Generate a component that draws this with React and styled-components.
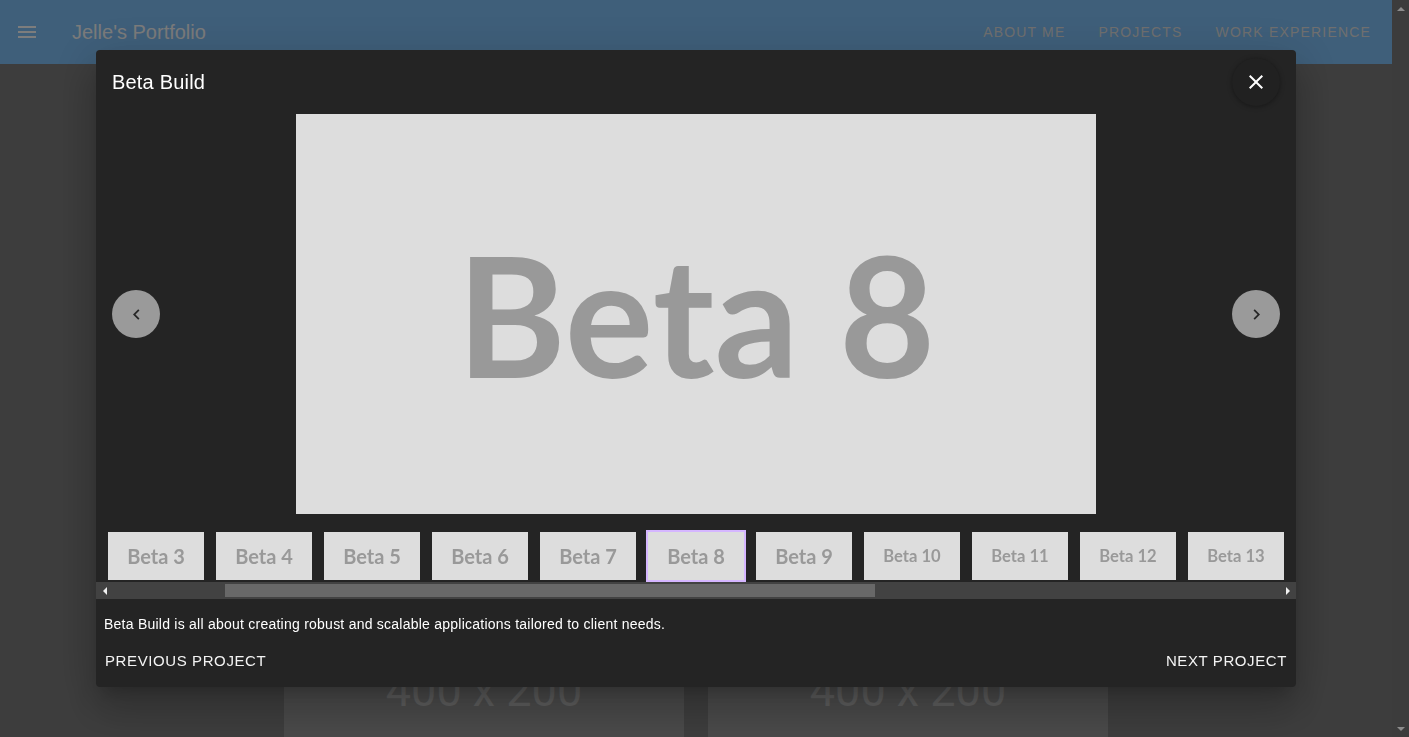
import React, { useLayoutEffect, useRef, useState } from "react";
import styled, { createGlobalStyle, css } from "styled-components";

const GlobalStyle = createGlobalStyle`
  html, body { margin: 0; height: 100%; overflow: hidden; }
  body {
    font-family: "Liberation Sans", Arial, sans-serif;
    background: #7b7b7b;
  }
`;

const Root = styled.div`
  display: flex;
  height: 100vh;
  overflow: hidden;
`;

const Page = styled.div`
  flex: 1;
  min-width: 0;
  overflow: hidden;
  background: #7b7b7b;
`;

/* ---------- fake scrollbars (the browser hides native ones) ---------- */

const arrowShape = {
  up: css`
    border-left: 4px solid transparent;
    border-right: 4px solid transparent;
    border-bottom: 4px solid currentColor;
  `,
  down: css`
    border-left: 4px solid transparent;
    border-right: 4px solid transparent;
    border-top: 4px solid currentColor;
  `,
  left: css`
    border-top: 4px solid transparent;
    border-bottom: 4px solid transparent;
    border-right: 4px solid currentColor;
  `,
  right: css`
    border-top: 4px solid transparent;
    border-bottom: 4px solid transparent;
    border-left: 4px solid currentColor;
  `,
};

const ScrollArrow = styled.span`
  flex: none;
  width: 17px;
  height: 17px;
  display: flex;
  align-items: center;
  justify-content: center;
  color: ${(p) => p.$color};

  &::before {
    content: "";
    width: 0;
    height: 0;
    ${(p) => arrowShape[p.$dir]}
  }
`;

const PageScrollbar = styled.aside`
  flex: none;
  width: 17px;
  display: flex;
  flex-direction: column;
  justify-content: space-between;
  background: #3c3c3c;
`;

const HScrollbar = styled.div`
  height: 17px;
  display: flex;
  align-items: center;
  background: #424242;
`;

const HTrack = styled.div`
  flex: 1;
  height: 13px;
  display: flex;
`;

const HThumb = styled.div`
  height: 13px;
  background: #686868;
`;

/* ---------- page ---------- */

const NavBar = styled.header`
  height: 64px;
  display: flex;
  align-items: center;
  padding: 0 21px 0 15px;
  background: #7ebef4;
`;

const MenuButton = styled.span`
  display: flex;
  width: 24px;
  height: 24px;
  color: #fafafa;
`;

const Brand = styled.div`
  margin-left: 33px;
  font-size: 20px;
  color: #f6f6f6;
  flex: 1;
`;

const NavLinks = styled.nav`
  display: flex;
  gap: 33px;
`;

const NavLink = styled.span`
  font-size: 14px;
  letter-spacing: 1.18px;
  text-transform: uppercase;
  color: #dedede;
`;

const Content = styled.main`
  padding-top: 526px;
  display: flex;
  justify-content: center;
`;

const CardGrid = styled.div`
  display: flex;
  gap: 24px;
`;

const PlaceholderCard = styled.div`
  width: 400px;
  height: 200px;
  background: #949494;
  display: flex;
  align-items: center;
  justify-content: center;
  font-family: Roboto, "Liberation Sans", sans-serif;
  font-size: 45px;
  color: #b9b9b9;
`;

/* ---------- dialog ---------- */

const Backdrop = styled.div`
  position: fixed;
  top: 0;
  left: 0;
  bottom: 0;
  right: 17px;
  background: rgba(0, 0, 0, 0.5);
  display: flex;
  align-items: center;
  justify-content: center;
`;

const Dialog = styled.div`
  width: 1200px;
  background: #242424;
  border-radius: 4px;
  box-shadow: 0 11px 15px -7px rgba(0,0,0,.2), 0 24px 38px 3px rgba(0,0,0,.14), 0 9px 46px 8px rgba(0,0,0,.12);
  display: flex;
  flex-direction: column;
  color: #fff;
`;

const DialogHeader = styled.div`
  display: flex;
  align-items: center;
  justify-content: space-between;
  padding: 8px 16px 0;
`;

const DialogTitle = styled.h2`
  margin: 0;
  font-size: 20px;
  font-weight: 400;
  letter-spacing: 0.2px;
  color: #fff;
`;

const RoundButton = styled.button`
  width: 48px;
  height: 48px;
  border-radius: 50%;
  border: none;
  padding: 0;
  display: flex;
  align-items: center;
  justify-content: center;
  cursor: pointer;
  background: ${(p) => (p.$variant === "close" ? "#212121" : "#9a9a9a")};
  color: ${(p) => (p.$variant === "close" ? "#ffffff" : "#262626")};
  box-shadow: ${(p) =>
    p.$variant === "close" ? "0 1px 5px rgba(0,0,0,.35)" : "none"};
`;

const Viewer = styled.div`
  display: flex;
  align-items: center;
  justify-content: space-between;
  padding: 0 16px;
  margin-top: 8px;
`;

const MainImage = styled.div`
  width: 800px;
  height: 400px;
  background: #dddddd;
  display: flex;
  align-items: center;
  justify-content: center;
  font-family: Lato, "Liberation Sans", sans-serif;
  font-weight: 700;
  font-size: 166px;
  line-height: 1;
  color: #999999;
`;

const ThumbSection = styled.div`
  margin-top: 16px;
  display: flex;
  flex-direction: column;
`;

const ThumbStrip = styled.div`
  position: relative;
  display: flex;
  gap: 12px;
  padding: 2px;
  overflow-x: auto;
  overflow-y: hidden;
  scrollbar-width: none;
`;

const Thumb = styled.div`
  flex: none;
  width: 96px;
  height: 48px;
  background: #dddddd;
  display: flex;
  align-items: center;
  justify-content: center;
  font-family: Lato, "Liberation Sans", sans-serif;
  font-weight: 700;
  font-size: ${(p) => p.$size}px;
  color: #999999;
  cursor: pointer;
  outline: ${(p) => (p.$active ? "2px solid #d5b6ff" : "none")};
`;

const Description = styled.p`
  margin: 0;
  padding: 15px 8px 0;
  font-size: 14px;
  line-height: 20px;
  letter-spacing: 0.24px;
  color: #ffffff;
`;

const Actions = styled.div`
  display: flex;
  justify-content: space-between;
  padding: 9px 8px 8px;
`;

const TextButton = styled.button`
  background: none;
  border: none;
  padding: 8px 1px;
  font-family: "Liberation Sans", Arial, sans-serif;
  font-size: 15px;
  line-height: 20px;
  letter-spacing: 0.6px;
  text-transform: uppercase;
  color: #f4f4f4;
  cursor: pointer;
`;

const MenuIcon = () => (
  <svg width="24" height="24" viewBox="0 0 24 24" fill="currentColor">
    <path d="M3 18h18v-2H3zm0-5h18v-2H3zm0-7v2h18V6z" />
  </svg>
);

const CloseIcon = () => (
  <svg width="24" height="24" viewBox="0 0 24 24" fill="currentColor">
    <path d="M19 6.41 17.59 5 12 10.59 6.41 5 5 6.41 10.59 12 5 17.59 6.41 19 12 13.41 17.59 19 19 17.59 13.41 12z" />
  </svg>
);

const ChevronLeft = () => (
  <svg width="21" height="21" viewBox="0 0 24 24" fill="currentColor">
    <path d="M15.41 7.41 14 6l-6 6 6 6 1.41-1.41L10.83 12z" />
  </svg>
);

const ChevronRight = () => (
  <svg width="21" height="21" viewBox="0 0 24 24" fill="currentColor">
    <path d="M10 6 8.59 7.41 13.17 12l-4.58 4.59L10 18l6-6z" />
  </svg>
);

const links = ["About me", "Projects", "Work experience"];
const thumbs = Array.from({ length: 20 }, (_, i) => i + 1);
const ACTIVE = 8;

export default function App() {
  const stripRef = useRef(null);
  const activeRef = useRef(null);
  const trackRef = useRef(null);
  const [thumb, setThumb] = useState({ left: 0, width: 0 });

  useLayoutEffect(() => {
    const strip = stripRef.current;
    const active = activeRef.current;
    const track = trackRef.current;
    if (!strip || !active || !track) return;
    strip.scrollLeft =
      active.offsetLeft + active.offsetWidth / 2 - strip.clientWidth / 2;
    const trackLen = track.clientWidth;
    const ratio = strip.clientWidth / strip.scrollWidth;
    const width = trackLen * ratio;
    const max = strip.scrollWidth - strip.clientWidth;
    const left = max > 0 ? (strip.scrollLeft / max) * (trackLen - width) : 0;
    setThumb({ left, width });
  }, []);

  return (
    <>
      <GlobalStyle />
      <Root>
        <Page>
          <NavBar>
            <MenuButton>
              <MenuIcon />
            </MenuButton>
            <Brand>Jelle's Portfolio</Brand>
            <NavLinks>
              {links.map((l) => (
                <NavLink key={l}>{l}</NavLink>
              ))}
            </NavLinks>
          </NavBar>
          <Content>
            <CardGrid>
              <PlaceholderCard>400 x 200</PlaceholderCard>
              <PlaceholderCard>400 x 200</PlaceholderCard>
            </CardGrid>
          </Content>
        </Page>
        <PageScrollbar>
          <ScrollArrow $dir="up" $color="#8c8c8c" />
          <ScrollArrow $dir="down" $color="#8c8c8c" />
        </PageScrollbar>
      </Root>
      <Backdrop>
        <Dialog>
          <DialogHeader>
            <DialogTitle>Beta Build</DialogTitle>
            <RoundButton $variant="close" aria-label="close">
              <CloseIcon />
            </RoundButton>
          </DialogHeader>
          <Viewer>
            <RoundButton aria-label="previous">
              <ChevronLeft />
            </RoundButton>
            <MainImage>Beta {ACTIVE}</MainImage>
            <RoundButton aria-label="next">
              <ChevronRight />
            </RoundButton>
          </Viewer>
          <ThumbSection>
            <ThumbStrip ref={stripRef}>
              {thumbs.map((n) => (
                <Thumb
                  key={n}
                  ref={n === ACTIVE ? activeRef : undefined}
                  $active={n === ACTIVE}
                  $size={n < 10 ? 20 : 16.6}
                >
                  Beta {n}
                </Thumb>
              ))}
            </ThumbStrip>
            <HScrollbar>
              <ScrollArrow $dir="left" $color="#f2f2f2" />
              <HTrack ref={trackRef}>
                <HThumb
                  style={{ marginLeft: thumb.left, width: thumb.width }}
                />
              </HTrack>
              <ScrollArrow $dir="right" $color="#f2f2f2" />
            </HScrollbar>
          </ThumbSection>
          <Description>
            Beta Build is all about creating robust and scalable applications
            tailored to client needs.
          </Description>
          <Actions>
            <TextButton>Previous Project</TextButton>
            <TextButton>Next Project</TextButton>
          </Actions>
        </Dialog>
      </Backdrop>
    </>
  );
}
